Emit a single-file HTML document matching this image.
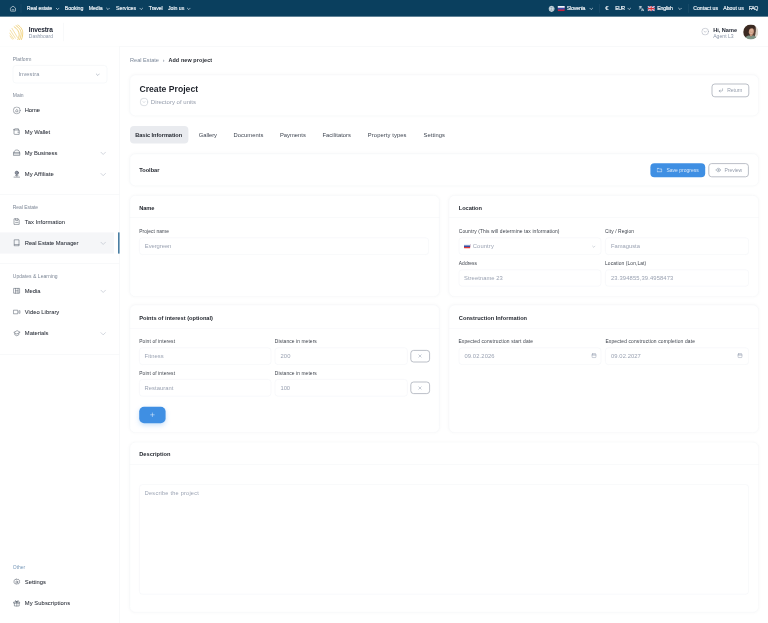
<!DOCTYPE html>
<html lang="en"><head>
<meta charset="utf-8">
<title>Create Project</title>
<style>
*{box-sizing:border-box;margin:0;padding:0}
html,body{width:768px;height:623px;overflow:hidden;background:#fff}
body{font-family:"Liberation Sans",sans-serif;color:#1f2937}
#root{width:1920px;height:1558px;transform:scale(.4);transform-origin:0 0;position:relative;background:#fff;overflow:hidden}
.abs{position:absolute}
/* top bar */
#top{position:absolute;left:0;top:0;width:1920px;height:42px;background:#0a3f5e;color:#eef3f8;font-size:13px;font-weight:400;-webkit-text-stroke:.4px #eef3f8}
#top span{position:absolute;top:12.500px;white-space:nowrap;line-height:16px}
#top .dv{position:absolute;top:10px;width:1px;height:22px;background:#2a5876}
#top svg{position:absolute}
/* header */
#hdr{position:absolute;left:0;top:42px;width:1920px;height:73.500px;background:#fff;border-bottom:1px solid #edf0f3}
/* sidebar */
#side{position:absolute;left:0;top:116px;width:299px;height:1442px;border-right:1px solid #edf0f3;background:#fff}
.slabel{position:absolute;left:32px;font-size:12.500px;color:#7d8796;line-height:14px;white-space:nowrap}
.sitem{position:absolute;left:0;width:298px;height:53px}
.sitem span{position:absolute;left:62px;top:17px;font-size:14.5px;line-height:18px;color:#2b303a;font-weight:400;white-space:nowrap;-webkit-text-stroke:.12px #2b303a}
.sitem svg.ic{position:absolute;left:32px;top:16px}
.sitem svg.ch{position:absolute;left:250px;top:18.500px}
.sdiv{position:absolute;left:0;width:298px;height:1px;background:#edf0f3}
/* main */
.card{position:absolute;background:#fff;border:1px solid #f3f5f8;border-radius:15px;box-shadow:0 0 8px rgba(30,40,60,.03)}
.ctitle{position:absolute;left:24px;font-size:15px;font-weight:700;color:#1f2633;line-height:18px;white-space:nowrap}
.chr{position:absolute;left:0;right:0;height:1px;background:#f0f2f5}
.lbl{position:absolute;font-size:11.5px;color:#2b3442;line-height:14px;white-space:nowrap}
.inp{position:absolute;height:44px;border:1px solid #eceff3;border-radius:8px;background:#fff;font-size:14.5px;color:#8f9bb0;line-height:42px;padding-left:14px;white-space:nowrap}
.tab{position:absolute;top:315px;height:44px;line-height:44px;font-size:14.5px;color:#3a4352;white-space:nowrap}
.btn{position:absolute;border-radius:8px;font-size:12.500px;white-space:nowrap}
.t{position:absolute;white-space:nowrap}
.bx{position:absolute}
</style>
</head>
<body>
<div id="root">

<div id="top">
  <svg style="left:24px;top:12.500px" width="17" height="17" viewBox="0 0 24 24" fill="none" stroke="#fff" stroke-width="2" stroke-linecap="round" stroke-linejoin="round"><path d="M3 10.5 12 3l9 7.5V20a1 1 0 0 1-1 1H4a1 1 0 0 1-1-1z"></path><path d="M9 16h6"></path></svg>
  <div class="dv" style="left:52px"></div>
  <span style="left: 67px; letter-spacing: -0.25px;">Real estate</span>
  <svg style="left:139px;top:16.500px" width="10" height="10" viewBox="0 0 10 10" fill="none" stroke="#e4ecf3" stroke-width="1.700" stroke-linecap="round" stroke-linejoin="round"><path d="M1.5 3.5 5 7l3.500-3.500"></path></svg>
  <span style="left: 162px; letter-spacing: -0.1px;">Booking</span>
  <span style="left: 222px; letter-spacing: -0.23px;">Media</span>
  <svg style="left:265px;top:16.500px" width="10" height="10" viewBox="0 0 10 10" fill="none" stroke="#e4ecf3" stroke-width="1.700" stroke-linecap="round" stroke-linejoin="round"><path d="M1.5 3.500 5 7l3.500-3.500"></path></svg>
  <span style="left: 290px; letter-spacing: 0.02px;">Services</span>
  <svg style="left:348px;top:16.500px" width="10" height="10" viewBox="0 0 10 10" fill="none" stroke="#e4ecf3" stroke-width="1.700" stroke-linecap="round" stroke-linejoin="round"><path d="M1.5 3.500 5 7l3.500-3.500"></path></svg>
  <span style="left: 372px; letter-spacing: -0.23px;">Travel</span>
  <span style="left: 420px; letter-spacing: -0.06px;">Join us</span>
  <svg style="left:467px;top:16.500px" width="10" height="10" viewBox="0 0 10 10" fill="none" stroke="#e4ecf3" stroke-width="1.700" stroke-linecap="round" stroke-linejoin="round"><path d="M1.5 3.500 5 7l3.500-3.500"></path></svg>

  <svg style="left:1371px;top:13.500px" width="16" height="16" viewBox="0 0 24 24" fill="rgba(255,255,255,.5)" stroke="#e8eff5" stroke-width="2.200"><circle cx="12" cy="12" r="10"></circle><path fill="none" d="M2 12h20M12 2c3 3 4 6.500 4 10s-1 7-4 10c-3-3-4-6.500-4-10s1-7 4-10z"></path></svg>
  <svg style="left:1394px;top:14.500px" width="18" height="13" viewBox="0 0 18 13"><rect width="18" height="13" rx="1.500" fill="#c4203a"></rect><rect width="18" height="8.700" fill="#3a49a8"></rect><rect width="18" height="4.300" fill="#f1f4f8"></rect></svg>
  <span style="left: 1417px; letter-spacing: -0.45px;">Slovenia</span>
  <svg style="left:1473px;top:16.500px" width="10" height="10" viewBox="0 0 10 10" fill="none" stroke="#e4ecf3" stroke-width="1.700" stroke-linecap="round" stroke-linejoin="round"><path d="M1.5 3.500 5 7l3.500-3.500"></path></svg>
  <div class="dv" style="left:1498px"></div>
  <span style="left:1513px;top:12px;font-size:15.500px;font-weight:700;-webkit-text-stroke:0">€</span>
  <span style="left: 1538px; letter-spacing: -1.32px;">EUR</span>
  <svg style="left:1568px;top:16.500px" width="10" height="10" viewBox="0 0 10 10" fill="none" stroke="#e4ecf3" stroke-width="1.700" stroke-linecap="round" stroke-linejoin="round"><path d="M1.5 3.500 5 7l3.500-3.500"></path></svg>
  <svg style="left:1596px;top:14px" width="15" height="15" viewBox="0 0 24 24" fill="none" stroke="#eef3f8" stroke-width="2.400" stroke-linecap="round" stroke-linejoin="round"><path d="M3 5h10M8 3v2M5 5c1 4 4 7 7 8M11 5c-1 4-4 7-8 9M13 21l4-9 4 9M14.500 18h5"></path></svg>
  <svg style="left:1619px;top:14.500px" width="18" height="13" viewBox="0 0 18 13"><rect width="18" height="13" rx="1.500" fill="#2f4a9c"></rect><path d="M0 0l18 13M18 0 0 13" stroke="#fff" stroke-width="2.600"></path><path d="M0 0l18 13M18 0 0 13" stroke="#d8343f" stroke-width="1"></path><path d="M9 0v13M0 6.500h18" stroke="#fff" stroke-width="4.600"></path><path d="M9 0v13M0 6.500h18" stroke="#d8343f" stroke-width="2.800"></path></svg>
  <span style="left: 1643px; letter-spacing: -0.52px;">English</span>
  <svg style="left:1695px;top:16.500px" width="10" height="10" viewBox="0 0 10 10" fill="none" stroke="#e4ecf3" stroke-width="1.700" stroke-linecap="round" stroke-linejoin="round"><path d="M1.5 3.500 5 7l3.500-3.500"></path></svg>
  <div class="dv" style="left:1720px"></div>
  <span style="left: 1733px; letter-spacing: -0.02px;">Contact us</span>
  <span style="left: 1808px; letter-spacing: 0.02px;">About us</span>
  <span style="left: 1872px; letter-spacing: -1.09px;">FAQ</span>
</div>

<div id="hdr">
  <svg class="abs" style="left:23px;top:19px" width="36" height="42" viewBox="0 0 36 42" fill="none" stroke="#ecc559" stroke-width="1.900" stroke-linecap="round">
    <path d="M21 1C30 6 35 16 34 24c-.5 6-2 11-3.500 14"></path><path d="M17 3c8 5 13.500 13 13 21.500-.5 5.500-2 10-4 13.500"></path><path d="M12.500 6c7 4 12.500 12 12.500 19.500 0 5-1.500 9-3.500 12.500"></path>
    <path d="M7 10l13.500 22.500" opacity=".7"></path><path d="M2.500 14.500l13 20" opacity=".7"></path><path d="M1 21.500l10 14.500" opacity=".7"></path><path d="M2 29l6 8" opacity=".7"></path>
  </svg>
  <div class="abs" style="left: 72px; top: 22px; font-size: 16.5px; font-weight: 700; color: rgb(28, 34, 48); line-height: 22px; letter-spacing: -0.44px;">Investra</div>
  <div class="abs" style="left: 72px; top: 43px; font-size: 12.5px; color: rgb(139, 150, 168); line-height: 15px; letter-spacing: -0.07px;">Dashboard</div>
  <div class="abs" style="left:158px;top:15px;width:1px;height:46px;background:#edf0f3"></div>

  <svg class="abs" style="left:1753px;top:27px" width="20" height="20" viewBox="0 0 20 20" fill="none" stroke="#a2a9b5" stroke-width="1.300" stroke-linecap="round" stroke-linejoin="round"><circle cx="10" cy="10" r="8.500"></circle><path d="M7 8.800 10 11.800l3-3"></path></svg>
  <div class="abs" style="left: 1783px; top: 24px; font-size: 14px; font-weight: 700; color: rgb(38, 44, 56); line-height: 19px; white-space: nowrap; letter-spacing: -0.05px;">Hi, Name</div>
  <div class="abs" style="left: 1783px; top: 42px; font-size: 12.7px; color: rgb(139, 150, 168); line-height: 15px; white-space: nowrap; letter-spacing: 0.06px;">Agent L3</div>
  <svg class="abs" style="left:1858px;top:18.500px" width="38" height="38" viewBox="0 0 36 36"><defs><clipPath id="av"><circle cx="18" cy="18" r="18"></circle></clipPath><filter id="avb" x="-10%" y="-10%" width="120%" height="120%"><feGaussianBlur stdDeviation="0.9"></feGaussianBlur></filter></defs><g clip-path="url(#av)"><rect width="36" height="36" fill="#ddd6cc"></rect><g filter="url(#avb)"><path d="M-2 -2h27c5 5 6 12 4 19l-4 8-3 13H-2z" fill="#3b2922"></path><path d="M27 8c3 5 3 12 1 18l-3 6-3-10z" fill="#5a4034"></path><ellipse cx="19" cy="16" rx="6.300" ry="8.200" fill="#cf9f84"></ellipse><ellipse cx="20" cy="14" rx="3.500" ry="4" fill="#dcb199"></ellipse><path d="M10 13c1-8 13-10 17-2-4-2.500-8-2.500-11-.5-2 2-3 6-3.500 10z" fill="#3b2922"></path><path d="M15.500 23h7l-1 6h-5z" fill="#c4947a"></path><path d="M2 38c1-9 7-11.500 13-12l3.500 3 3.500-3c6 .5 11 3 12 12z" fill="#7e9485"></path><path d="M16.500 20.500c1.500 1.200 3.500 1.200 5 0" stroke="#f3e9e2" stroke-width="1" fill="none"></path></g></g></svg>
</div>

<div id="side">
  <div class="slabel" style="top: 25px; letter-spacing: 0.03px;">Platform</div>
  <div class="abs" style="left:32px;top:47px;width:236px;height:45px;border:1px solid #eceff3;border-radius:8px"></div>
  <div class="abs" style="left: 46px; top: 61px; font-size: 14px; color: rgb(132, 142, 158); line-height: 16px; letter-spacing: 0.4px;">Investra</div>
  <svg class="abs" style="left:239px;top:65px" width="11" height="11" viewBox="0 0 10 10" fill="none" stroke="#8b96a8" stroke-width="1.200" stroke-linecap="round" stroke-linejoin="round"><path d="M1.5 3.500 5 7l3.500-3.500"></path></svg>

  <div class="slabel" style="top: 115px; letter-spacing: -0.09px;">Main</div>
  <div class="sitem" style="top:134px"><svg class="ic" width="20" height="20" viewBox="0 0 20 20" fill="none" stroke="#505866" stroke-width="1.200" stroke-linecap="round" stroke-linejoin="round"><circle cx="10" cy="10" r="8.700"></circle><path d="M7.500 12.500V9.300L10 7.300l2.500 2v3.200z"></path></svg><span style="letter-spacing: -0.3px;">Home</span></div>
  <div class="sitem" style="top:187px"><svg class="ic" width="20" height="20" viewBox="0 0 20 20" fill="none" stroke="#505866" stroke-width="1.300" stroke-linecap="round" stroke-linejoin="round"><path d="M3 5.500A2.500 2.500 0 0 1 5.500 3H14v3M3 5.500V15a2 2 0 0 0 2 2h11V6H5.500A2.500 2.500 0 0 1 3 5.500zM12.500 11.500h3"></path></svg><span style="letter-spacing: 0.02px;">My Wallet</span></div>
  <div class="sitem" style="top:240px"><svg class="ic" width="20" height="20" viewBox="0 0 20 20" fill="none" stroke="#505866" stroke-width="1.300" stroke-linecap="round" stroke-linejoin="round"><path d="M3 9c0-4 3-6 7-6s7 2 7 6M2.500 9h15v7.500h-15zM2.500 12.500h15"></path></svg><span style="letter-spacing: -0.09px;">My Business</span><svg class="ch" width="16" height="16" viewBox="0 0 10 10" fill="none" stroke="#b8bfca" stroke-width="1" stroke-linecap="round" stroke-linejoin="round"><path d="M1.5 3.500 5 7l3.500-3.500"></path></svg></div>
  <div class="sitem" style="top:293px"><svg class="ic" width="20" height="20" viewBox="0 0 20 20" fill="none" stroke="#505866" stroke-width="1.400" stroke-linecap="round" stroke-linejoin="round"><circle cx="10" cy="7" r="4.200" fill="#9097a3"></circle><path d="M10 11.200V15M6.500 13.500c2 1.700 5 1.700 7 0M3 17.800h14"></path></svg><span style="letter-spacing: 0.24px;">My Affiliate</span><svg class="ch" width="16" height="16" viewBox="0 0 10 10" fill="none" stroke="#b8bfca" stroke-width="1" stroke-linecap="round" stroke-linejoin="round"><path d="M1.5 3.500 5 7l3.500-3.500"></path></svg></div>

  <div class="sdiv" style="top:370px"></div>
  <div class="slabel" style="top: 396px; letter-spacing: -0.13px;">Real Estate</div>
  <div class="sitem" style="top:412px"><svg class="ic" width="20" height="20" viewBox="0 0 20 20" fill="none" stroke="#505866" stroke-width="1.300" stroke-linecap="round" stroke-linejoin="round"><path d="M4 3h9l3 3v11H4zM7 3v4h6V3M7 12h6"></path></svg><span style="letter-spacing: 0.11px;">Tax Information</span></div>
  <div class="abs" style="left:295px;top:465px;width:4px;height:53px;background:#4a7ea3"></div>
  <div class="sitem" style="top:465px;background:#f5f6f8;width:285px"><svg class="ic" width="20" height="20" viewBox="0 0 20 20" fill="none" stroke="#505866" stroke-width="1.300" stroke-linecap="round" stroke-linejoin="round"><path d="M4.500 2.500h11v15h-11zM4.500 14.500h11"></path></svg><span style="letter-spacing: -0.12px;">Real Estate Manager</span><svg class="ch" width="16" height="16" viewBox="0 0 10 10" fill="none" stroke="#b8bfca" stroke-width="1" stroke-linecap="round" stroke-linejoin="round"><path d="M1.5 3.500 5 7l3.500-3.500"></path></svg></div>

  <div class="sdiv" style="top:543px"></div>
  <div class="slabel" style="top: 569px; letter-spacing: 0.08px;">Updates &amp; Learning</div>
  <div class="sitem" style="top:585px"><svg class="ic" width="20" height="20" viewBox="0 0 20 20" fill="none" stroke="#505866" stroke-width="1.300" stroke-linecap="round" stroke-linejoin="round"><path d="M3 4h14v12H3zM7 4v12M13 4v12M7 10h6"></path></svg><span style="letter-spacing: -0.1px;">Media</span><svg class="ch" width="16" height="16" viewBox="0 0 10 10" fill="none" stroke="#b8bfca" stroke-width="1" stroke-linecap="round" stroke-linejoin="round"><path d="M1.5 3.500 5 7l3.500-3.500"></path></svg></div>
  <div class="sitem" style="top:638px"><svg class="ic" width="20" height="20" viewBox="0 0 20 20" fill="none" stroke="#505866" stroke-width="1.300" stroke-linecap="round" stroke-linejoin="round"><path d="M2.500 5.500h10v9h-10zM15 8l3-1.500v7L15 12"></path></svg><span style="letter-spacing: 0.08px;">Video Library</span></div>
  <div class="sitem" style="top:691px"><svg class="ic" width="20" height="20" viewBox="0 0 20 20" fill="none" stroke="#505866" stroke-width="1.300" stroke-linecap="round" stroke-linejoin="round"><path d="M10 4 2.500 8 10 12l7.500-4zM5 10.500V14l5 2.500 5-2.500v-3.500"></path></svg><span style="letter-spacing: 0.02px;">Materials</span><svg class="ch" width="16" height="16" viewBox="0 0 10 10" fill="none" stroke="#b8bfca" stroke-width="1" stroke-linecap="round" stroke-linejoin="round"><path d="M1.5 3.500 5 7l3.500-3.500"></path></svg></div>
  <div class="sdiv" style="top:769px"></div>

  <div class="slabel" style="top: 1295px; color: rgb(123, 155, 187); letter-spacing: -0.1px;">Other</div>
  <div class="sitem" style="top:1313px"><svg class="ic" width="20" height="20" viewBox="0 0 20 20" fill="none" stroke="#505866" stroke-width="1.300" stroke-linecap="round" stroke-linejoin="round"><circle cx="10" cy="10" r="2.500"></circle><path d="M10 2.500l2 1.200 2.300-.3 1 2.100 2 1.200-.5 2.300.5 2.300-2 1.200-1 2.100-2.300-.3-2 1.200-2-1.200-2.300.3-1-2.100-2-1.200.5-2.300L2.700 6.700l2-1.200 1-2.100 2.300.3z"></path></svg><span style="letter-spacing: 0.04px;">Settings</span></div>
  <div class="sitem" style="top:1366px"><svg class="ic" width="20" height="20" viewBox="0 0 20 20" fill="none" stroke="#505866" stroke-width="1.300" stroke-linecap="round" stroke-linejoin="round"><path d="M3 7h14v3H3zM4 10v7h12v-7M10 7v10M10 7C8 7 6 6 6 4.500S8 2.500 10 7c2-4.500 4-4 4-2.500S12 7 10 7"></path></svg><span style="letter-spacing: 0.18px;">My Subscriptions</span></div>
</div>

<!-- MAIN -->
<div class="t" style="left: 325px; top: 142px; font-size: 14px; line-height: 18px; color: rgb(123, 135, 153); letter-spacing: 0.01px;">Real Estate</div>
<div class="t" style="left:407px;top:142px;font-size:13.5px;line-height:17px;color:#7b8799;">›</div>
<div class="t" style="left: 421px; top: 142.5px; font-size: 13.5px; line-height: 17px; font-weight: 700; color: rgb(31, 35, 43); letter-spacing: 0.3px;">Add new project</div>
<div class="card" style="left:323.5px;top:186.5px;width:1573px;height:103px;"></div>
<div class="t" style="left: 348.5px; top: 210px; font-size: 21.5px; line-height: 28px; font-weight: 700; color: rgb(31, 35, 43); letter-spacing: 0.07px;">Create Project</div>
<svg class="abs" style="left:349px;top:244px" width="22" height="22" viewBox="0 0 22 22" fill="none" stroke="#b2b9c5" stroke-width="1.200" stroke-linecap="round" stroke-linejoin="round"><circle cx="11" cy="11" r="9.500"></circle><path d="M8.500 10 11 12.500 13.500 10"></path></svg>
<div class="t" style="left: 377px; top: 245.5px; font-size: 15px; line-height: 19px; color: rgb(148, 156, 171); letter-spacing: 0.03px;">Directory of units</div>
<div class="bx" style="left:1778.5px;top:208.5px;width:94px;height:34px;border:2px solid #a9afb9;border-radius:8px"></div>
<svg class="abs" style="left:1795px;top:219px" width="14" height="14" viewBox="0 0 14 14" fill="none" stroke="#7b8799" stroke-width="1.300" stroke-linecap="round" stroke-linejoin="round"><path d="M11.500 3v3.500a2 2 0 0 1-2 2H3M5.500 6 3 8.500 5.500 11"></path></svg>
<div class="t" style="left: 1818px; top: 218px; font-size: 12.5px; line-height: 16px; color: rgb(148, 156, 171); letter-spacing: -0.01px;">Return</div>
<div class="bx" style="left:325px;top:315px;width:145.5px;height:44px;background:#e9ebef;border-radius:10px"></div>
<div class="t" style="left: 338px; top: 328px; font-size: 14px; line-height: 18px; font-weight: 700; color: rgb(31, 35, 43); letter-spacing: -0.06px;">Basic Information</div>
<div class="t" style="left: 497px; top: 328px; font-size: 14.5px; line-height: 18px; color: rgb(61, 68, 80); letter-spacing: -0.1px;">Gallery</div>
<div class="t" style="left: 584px; top: 328px; font-size: 14.5px; line-height: 18px; color: rgb(61, 68, 80); letter-spacing: 0.13px;">Documents</div>
<div class="t" style="left: 700px; top: 328px; font-size: 14.5px; line-height: 18px; color: rgb(61, 68, 80); letter-spacing: 0px;">Payments</div>
<div class="t" style="left: 806px; top: 328px; font-size: 14.5px; line-height: 18px; color: rgb(61, 68, 80); letter-spacing: 0.12px;">Facilitators</div>
<div class="t" style="left: 919.5px; top: 328px; font-size: 14.5px; line-height: 18px; color: rgb(61, 68, 80); letter-spacing: 0.25px;">Property types</div>
<div class="t" style="left: 1059px; top: 328px; font-size: 14.5px; line-height: 18px; color: rgb(61, 68, 80); letter-spacing: 0.14px;">Settings</div>
<div class="card" style="left:323.5px;top:383.5px;width:1573px;height:81px;"></div>
<div class="t" style="left: 348px; top: 416.5px; font-size: 14.2px; line-height: 18px; font-weight: 700; color: rgb(31, 35, 43); letter-spacing: -0.07px;">Toolbar</div>
<div class="bx" style="left:1626px;top:408px;width:137px;height:34.5px;background:#3f8fe3;border-radius:10px"></div>
<svg class="abs" style="left:1642px;top:418px" width="14" height="14" viewBox="0 0 14 14" fill="none" stroke="#fff" stroke-width="1.300" stroke-linecap="round" stroke-linejoin="round"><path d="M1.500 3h4l1.500 1.500h5.500v7h-11z"></path></svg>
<div class="t" style="left: 1666px; top: 417px; font-size: 12.5px; line-height: 16px; color: rgb(219, 233, 250); letter-spacing: 0.03px;">Save progress</div>
<div class="bx" style="left:1771px;top:408px;width:101px;height:34.5px;border:2px solid #a9afb9;border-radius:8px"></div>
<svg class="abs" style="left:1788.5px;top:418px" width="14" height="14" viewBox="0 0 14 14" fill="none" stroke="#7b8799" stroke-width="1.200" stroke-linecap="round" stroke-linejoin="round"><path d="M1 7c2-3.500 4-4.500 6-4.500S11 3.500 13 7c-2 3.500-4 4.500-6 4.500S3 10.500 1 7z"></path><circle cx="7" cy="7" r="1.800"></circle></svg>
<div class="t" style="left: 1811px; top: 417px; font-size: 12.5px; line-height: 16px; color: rgb(148, 156, 171); letter-spacing: 0px;">Preview</div>
<div class="card" style="left:323.5px;top:487.5px;width:775px;height:254px;"></div>
<div class="t" style="left: 348px; top: 510px; font-size: 14.2px; line-height: 18px; font-weight: 700; color: rgb(31, 35, 43); letter-spacing: -0.16px;">Name</div>
<div class="bx" style="left:323.5px;top:543px;width:775px;height:1px;background:#f1f3f6"></div>
<div class="t" style="left: 348px; top: 572px; font-size: 12.2px; line-height: 15px; color: rgb(58, 63, 73); letter-spacing: 0.22px;">Project name</div>
<div class="bx" style="left:348px;top:593.5px;width:723.5px;height:43px;border:1px solid #eef1f4;border-radius:8px;"></div>
<div class="t" style="left: 362px; top: 607px; font-size: 14.5px; line-height: 18px; color: rgb(154, 162, 178); letter-spacing: -0.07px;">Evergreen</div>
<div class="card" style="left:1122px;top:487.5px;width:774.5px;height:254px;"></div>
<div class="t" style="left: 1147px; top: 510px; font-size: 14.2px; line-height: 18px; font-weight: 700; color: rgb(31, 35, 43); letter-spacing: -0.2px;">Location</div>
<div class="bx" style="left:1122px;top:543px;width:774.5px;height:1px;background:#f1f3f6"></div>
<div class="t" style="left: 1147px; top: 572px; font-size: 12.2px; line-height: 15px; color: rgb(58, 63, 73); letter-spacing: 0.3px;">Country (This will determine tax information)</div>
<div class="bx" style="left:1147px;top:593.5px;width:356px;height:43px;border:1px solid #eef1f4;border-radius:8px;"></div>
<div class="t" style="left: 1182px; top: 607px; font-size: 14.5px; line-height: 18px; color: rgb(154, 162, 178); letter-spacing: 0.28px;">Country</div>
<svg class="abs" style="left:1160px;top:610px" width="16" height="11" viewBox="0 0 16 11"><rect width="16" height="11" rx="1.500" fill="#e03a3a"></rect><rect width="16" height="7.300" fill="#2b4fa8"></rect><rect width="16" height="3.600" fill="#eef1f6"></rect></svg>
<svg class="abs" style="left:1479.5px;top:611.5px" width="9" height="9" viewBox="0 0 10 10" fill="none" stroke="#9aa5b5" stroke-width="1.200" stroke-linecap="round" stroke-linejoin="round"><path d="M1.5 3.500 5 7l3.500-3.500"></path></svg>
<div class="t" style="left: 1512.5px; top: 572px; font-size: 12.2px; line-height: 15px; color: rgb(58, 63, 73); letter-spacing: 0.21px;">City / Region</div>
<div class="bx" style="left:1513px;top:593.5px;width:359px;height:43px;border:1px solid #eef1f4;border-radius:8px;"></div>
<div class="t" style="left: 1527.5px; top: 607px; font-size: 14.5px; line-height: 18px; color: rgb(154, 162, 178); letter-spacing: -0.03px;">Famagusta</div>
<div class="t" style="left: 1147px; top: 651px; font-size: 12.2px; line-height: 15px; color: rgb(58, 63, 73); letter-spacing: 0.15px;">Address</div>
<div class="bx" style="left:1147px;top:673.5px;width:356px;height:42.5px;border:1px solid #eef1f4;border-radius:8px;"></div>
<div class="t" style="left: 1160px; top: 686.5px; font-size: 14.5px; line-height: 18px; color: rgb(154, 162, 178); letter-spacing: 0.16px;">Streetname 23</div>
<div class="t" style="left: 1512.5px; top: 651px; font-size: 12.2px; line-height: 15px; color: rgb(58, 63, 73); letter-spacing: 0.28px;">Location (Lon,Lat)</div>
<div class="bx" style="left:1513px;top:673.5px;width:359px;height:42.5px;border:1px solid #eef1f4;border-radius:8px;"></div>
<div class="t" style="left: 1527.5px; top: 686.5px; font-size: 14.5px; line-height: 18px; color: rgb(154, 162, 178); letter-spacing: 0.35px;">23.394855,39.4958473</div>
<div class="card" style="left:323.5px;top:761.5px;width:775px;height:320.5px;"></div>
<div class="t" style="left: 348px; top: 785px; font-size: 14.2px; line-height: 18px; font-weight: 700; color: rgb(31, 35, 43); letter-spacing: 0px;">Points of interest (optional)</div>
<div class="bx" style="left:323.5px;top:819.5px;width:775px;height:1px;background:#f1f3f6"></div>
<div class="t" style="left: 348px; top: 847px; font-size: 12.2px; line-height: 15px; color: rgb(58, 63, 73); letter-spacing: 0.3px;">Point of interest</div>
<div class="bx" style="left:348px;top:869px;width:330px;height:43px;border:1px solid #eef1f4;border-radius:8px;"></div>
<div class="t" style="left: 361.5px; top: 882px; font-size: 14.5px; line-height: 18px; color: rgb(154, 162, 178); letter-spacing: 0.18px;">Fitness</div>
<div class="t" style="left: 687px; top: 847px; font-size: 12.2px; line-height: 15px; color: rgb(58, 63, 73); letter-spacing: 0.24px;">Distance in meters</div>
<div class="bx" style="left:687px;top:869px;width:332px;height:43px;border:1px solid #eef1f4;border-radius:8px;"></div>
<div class="t" style="left: 701px; top: 882px; font-size: 14.5px; line-height: 18px; color: rgb(154, 162, 178); letter-spacing: 0.6px;">200</div>
<div class="bx" style="left:1026px;top:875px;width:48.5px;height:31px;border:2px solid #a9afb9;border-radius:8px"></div>
<svg class="abs" style="left:1044px;top:884px" width="12" height="12" viewBox="0 0 12 12" fill="none" stroke="#8b96a8" stroke-width="1.200" stroke-linecap="round"><path d="M3 3l6 6M9 3l-6 6"></path></svg>
<div class="t" style="left: 348px; top: 926px; font-size: 12.2px; line-height: 15px; color: rgb(58, 63, 73); letter-spacing: 0.3px;">Point of interest</div>
<div class="bx" style="left:348px;top:948px;width:330px;height:43px;border:1px solid #eef1f4;border-radius:8px;"></div>
<div class="t" style="left: 361.5px; top: 961px; font-size: 14.5px; line-height: 18px; color: rgb(154, 162, 178); letter-spacing: 0.11px;">Restaurant</div>
<div class="t" style="left: 687px; top: 926px; font-size: 12.2px; line-height: 15px; color: rgb(58, 63, 73); letter-spacing: 0.24px;">Distance in meters</div>
<div class="bx" style="left:687px;top:948px;width:332px;height:43px;border:1px solid #eef1f4;border-radius:8px;"></div>
<div class="t" style="left: 701px; top: 961px; font-size: 14.5px; line-height: 18px; color: rgb(154, 162, 178); letter-spacing: 0.02px;">100</div>
<div class="bx" style="left:1026px;top:954px;width:48.5px;height:31px;border:2px solid #a9afb9;border-radius:8px"></div>
<svg class="abs" style="left:1044px;top:963.5px" width="12" height="12" viewBox="0 0 12 12" fill="none" stroke="#8b96a8" stroke-width="1.200" stroke-linecap="round"><path d="M3 3l6 6M9 3l-6 6"></path></svg>
<div class="bx" style="left:348px;top:1016.5px;width:65.5px;height:41px;background:#3f8fe3;border-radius:12px;box-shadow:0 5px 12px rgba(59,142,230,.28)"></div>
<svg class="abs" style="left:374px;top:1030px" width="14" height="14" viewBox="0 0 14 14" fill="none" stroke="#dcebfb" stroke-width="1.400" stroke-linecap="round"><path d="M7 2.500v9M2.500 7h9"></path></svg>
<div class="card" style="left:1122px;top:761.5px;width:774.5px;height:320.5px;"></div>
<div class="t" style="left: 1147px; top: 785px; font-size: 14.2px; line-height: 18px; font-weight: 700; color: rgb(31, 35, 43); letter-spacing: 0.02px;">Construction Information</div>
<div class="bx" style="left:1122px;top:819.5px;width:774.5px;height:1px;background:#f1f3f6"></div>
<div class="t" style="left: 1146px; top: 847px; font-size: 12.2px; line-height: 15px; color: rgb(58, 63, 73); letter-spacing: 0.4px;">Expected construction start date</div>
<div class="bx" style="left:1147px;top:869px;width:356px;height:43px;border:1px solid #eef1f4;border-radius:8px;"></div>
<div class="t" style="left: 1161px; top: 882px; font-size: 14.5px; line-height: 18px; color: rgb(154, 162, 178); letter-spacing: 0.32px;">09.02.2026</div>
<svg class="abs" style="left:1477.5px;top:882px" width="14" height="14" viewBox="0 0 14 14" fill="none" stroke="#8b96a8" stroke-width="1.200" stroke-linecap="round" stroke-linejoin="round"><rect x="2" y="3" width="10" height="9" rx="1.500"></rect><path d="M2 6h10M4.500 1.500v2M9.500 1.500v2"></path></svg>
<div class="t" style="left: 1513.5px; top: 847px; font-size: 12.2px; line-height: 15px; color: rgb(58, 63, 73); letter-spacing: 0.4px;">Expected construction completion date</div>
<div class="bx" style="left:1513px;top:869px;width:359px;height:43px;border:1px solid #eef1f4;border-radius:8px;"></div>
<div class="t" style="left: 1527.5px; top: 882px; font-size: 14.5px; line-height: 18px; color: rgb(154, 162, 178); letter-spacing: 0.22px;">09.02.2027</div>
<svg class="abs" style="left:1843px;top:882px" width="14" height="14" viewBox="0 0 14 14" fill="none" stroke="#8b96a8" stroke-width="1.200" stroke-linecap="round" stroke-linejoin="round"><rect x="2" y="3" width="10" height="9" rx="1.500"></rect><path d="M2 6h10M4.500 1.500v2M9.500 1.500v2"></path></svg>
<div class="card" style="left:323.5px;top:1105px;width:1573px;height:425.5px;"></div>
<div class="t" style="left: 348px; top: 1126px; font-size: 14.2px; line-height: 18px; font-weight: 700; color: rgb(31, 35, 43); letter-spacing: 0.02px;">Description</div>
<div class="bx" style="left:323.5px;top:1161px;width:1573px;height:1px;background:#f1f3f6"></div>
<div class="bx" style="left:348px;top:1211px;width:1524px;height:275px;border:1px solid #eef1f4;border-radius:8px;"></div>
<div class="t" style="left: 362px; top: 1225px; font-size: 13.8px; line-height: 17px; color: rgb(154, 162, 178); letter-spacing: 0.64px;">Describe the project</div>

</div>


</body></html>
